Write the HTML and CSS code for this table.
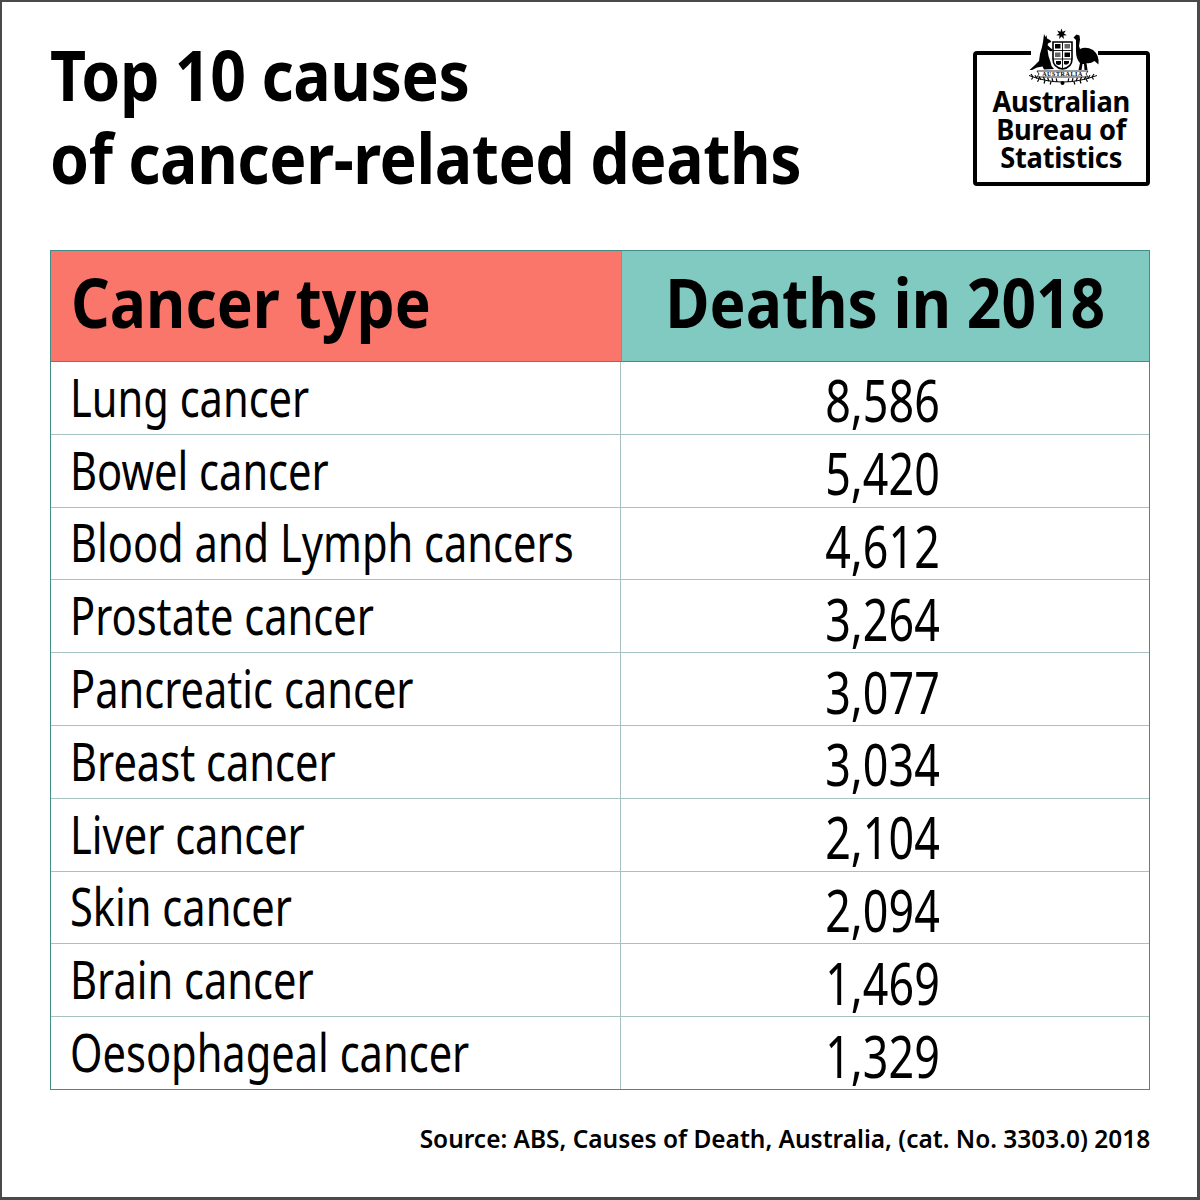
FILE: index.html
```html
<!DOCTYPE html>
<html lang="en">
<head>
<meta charset="utf-8">
<title>Top 10 causes of cancer-related deaths</title>
<link rel="stylesheet" href="styles.css">
</head>
<body>
<div class="frame">
  <header class="top">
    <h1 class="title"><span class="sx">Top 10 causes<br>of cancer-related deaths</span></h1>
    <div class="logo">
      <svg class="crest" width="90" height="62" viewBox="0 0 90 62" aria-hidden="true">
        <rect x="11" y="24" width="67" height="6" fill="#fff"/>
        <polygon fill="#000" points="41.5,2.5 42.58,5.75 45.8,4.57 43.94,7.44 46.86,9.22 43.45,9.56 43.89,12.96 41.5,10.5 39.11,12.96 39.55,9.56 36.14,9.22 39.06,7.44 37.2,4.57 40.42,5.75"/>
        <path fill="#000" d="M24,8 L25.5,11 L26.5,9 L27,12.5 L30,14 L31.5,16 L28.5,17 L27.5,19 L30.5,22 L33,24 L31,25.5 L27.5,23.5 L28.5,30 L30.5,36 L31.5,40 L34,43 L24,43.5 L22.5,40.5 L17,41.5 L12,44 L9.5,44 L15,39 L19,35 L20,28 L22,21 L23,16 L23.5,12 Z"/>
        <path d="M33,16 H52 V33 Q52,41.5 42.5,43 Q33,41.5 33,33 Z" fill="#fff" stroke="#000" stroke-width="1.6"/>
        <path d="M42.5,16 V43 M33,24.5 H52 M33,33 H52" stroke="#000" stroke-width="0.9"/>
        <rect x="35" y="18" width="5.5" height="4.5" fill="#000"/>
        <rect x="44.5" y="18" width="5.5" height="4.5" fill="#000" opacity="0.6"/>
        <rect x="35" y="26.5" width="5.5" height="4.5" fill="#000" opacity="0.6"/>
        <rect x="44.5" y="26.5" width="5.5" height="4.5" fill="#000"/>
        <path d="M36,35 h5 v3 q-2.5,2 -5,0 Z M44,35 h5 v2 q-2.5,3 -5,1 Z" fill="#000"/>
        <path fill="#000" d="M53.5,11.5 L56.5,8.5 L59.5,9.5 L60,13.5 L59,20 L60,23 Q66,20 73,24 Q79.5,29 78.5,38.5 L74.5,35 Q70,38 66.5,37 L67.5,44 L64.5,44 L64,38 L62.5,38 L61.5,44 L58.5,44 L60,37 Q56,33 56,25 L56,14 Z"/>
        <path d="M17,45 H68 L66,48 L68,51 H17 L19,48 Z" fill="#fff" stroke="#000" stroke-width="0.8"/>
        <text x="42.5" y="50.3" text-anchor="middle" class="crest-text">AUSTRALIA</text>
        <path d="M42,56 Q26,56 9,49.5 M43,56 Q59,56 77,49.5" fill="none" stroke="#000" stroke-width="1"/>
        <path d="M13,51 l-2,-3 M17,52.5 l-2,-3.2 M21,53.7 l-2,-3.2 M25,54.5 l-1.6,-3.4 M29,55.2 l-1.4,-3.4 M33,55.6 l-1,-3.5 M37,55.9 l-0.8,-3.5 M72,51 l2,-3 M68,52.5 l2,-3.2 M64,53.7 l2,-3.2 M60,54.5 l1.6,-3.4 M56,55.2 l1.4,-3.4 M52,55.6 l1,-3.5 M48,55.9 l0.8,-3.5 M13,51 l-1.5,2.5 M19,53 l-1.5,2.8 M25,54.5 l-1,3 M31,55.5 l-0.8,3 M72,51 l1.5,2.5 M66,53 l1.5,2.8 M60,54.5 l1,3 M54,55.5 l0.8,3" fill="none" stroke="#000" stroke-width="1.2"/>
        <circle cx="42.5" cy="57" r="2" fill="#000"/>
      </svg>
      <div class="logo-text"><span class="sx">Australian<br>Bureau of<br>Statistics</span></div>
    </div>
  </header>

  <div class="table">
    <div class="thead">
      <div class="th th-type"><span class="sx">Cancer type</span></div>
      <div class="th th-deaths"><span class="sx">Deaths in 2018</span></div>
    </div>
    <div class="tbody">
      <div class="row"><div class="cell name"><span class="sx">Lung cancer</span></div><div class="cell num"><span class="sx">8,586</span></div></div>
      <div class="row"><div class="cell name"><span class="sx">Bowel cancer</span></div><div class="cell num"><span class="sx">5,420</span></div></div>
      <div class="row"><div class="cell name"><span class="sx">Blood and Lymph cancers</span></div><div class="cell num"><span class="sx">4,612</span></div></div>
      <div class="row"><div class="cell name"><span class="sx">Prostate cancer</span></div><div class="cell num"><span class="sx">3,264</span></div></div>
      <div class="row"><div class="cell name"><span class="sx">Pancreatic cancer</span></div><div class="cell num"><span class="sx">3,077</span></div></div>
      <div class="row"><div class="cell name"><span class="sx">Breast cancer</span></div><div class="cell num"><span class="sx">3,034</span></div></div>
      <div class="row"><div class="cell name"><span class="sx">Liver cancer</span></div><div class="cell num"><span class="sx">2,104</span></div></div>
      <div class="row"><div class="cell name"><span class="sx">Skin cancer</span></div><div class="cell num"><span class="sx">2,094</span></div></div>
      <div class="row"><div class="cell name"><span class="sx">Brain cancer</span></div><div class="cell num"><span class="sx">1,469</span></div></div>
      <div class="row"><div class="cell name"><span class="sx">Oesophageal cancer</span></div><div class="cell num"><span class="sx">1,329</span></div></div>
    </div>
  </div>

  <p class="source"><span class="sx">Source: ABS, Causes of Death, Australia, (cat. No. 3303.0) 2018</span></p>
</div>
</body>
</html>
```

FILE: styles.css
```css
html, body {
  margin: 0;
  padding: 0;
  background: #fff;
}

.frame {
  width: 1200px;
  height: 1200px;
  box-sizing: border-box;
  border: 2px solid #4a4a4a;
  border-right-width: 3px;
  border-bottom-width: 3px;
  padding: 31px 47px 0 48px;
  font-family: "Noto Sans", "Open Sans", "Liberation Sans", sans-serif;
  color: #000;
  background: #fff;
}

.sx {
  display: inline-block;
  white-space: nowrap;
}

.top {
  display: flex;
  justify-content: space-between;
  align-items: flex-start;
  height: 217px;
}

.title {
  margin: 0;
  font-size: 70px;
  line-height: 83px;
  font-weight: 700;
  letter-spacing: -0.5px;
}

.title .sx {
  transform: scaleX(0.894);
  transform-origin: left top;
}

.logo {
  position: relative;
  margin-top: 18px;
  width: 177px;
  height: 135px;
  box-sizing: border-box;
  border: 4px solid #000;
  border-radius: 4px;
  text-align: center;
}

.crest {
  position: absolute;
  left: 43px;
  top: -29px;
  overflow: visible;
}

.crest-text {
  font-family: "Liberation Serif", "DejaVu Serif", serif;
  font-size: 6px;
  font-weight: 700;
  letter-spacing: 0.6px;
  fill: #000;
}

.logo-text {
  padding-top: 32px;
  font-size: 29px;
  line-height: 28px;
  font-weight: 700;
  letter-spacing: -0.3px;
}

.logo-text .sx {
  transform: scaleX(0.94);
  transform-origin: center top;
}

.table {
  width: 1100px;
  box-sizing: border-box;
  border: 1px solid #3f8d85;
}

.thead {
  display: grid;
  grid-template-columns: 570px 1fr;
  height: 110px;
  border-bottom: 1px solid #3f8d85;
}

.th {
  display: flex;
  align-items: center;
  padding-bottom: 9px;
  box-sizing: border-box;
  font-size: 68px;
  line-height: 1;
  font-weight: 700;
}

.th-type {
  background: #fa766b;
  padding-left: 20px;
}

.th-type .sx {
  transform: scaleX(0.89);
  transform-origin: left center;
}

.th-deaths {
  background: #80cac1;
  justify-content: center;
  border-left: 1px solid #5aa59c;
}

.th-deaths .sx {
  transform: scaleX(0.89);
  transform-origin: center center;
}

.row {
  display: grid;
  grid-template-columns: 570px 1fr;
  height: 71.8px;
  border-bottom: 1px solid #a6c3bf;
}

.row:last-child {
  border-bottom: none;
}

.cell {
  display: flex;
  align-items: center;
  box-sizing: border-box;
  line-height: 1;
  font-weight: 400;
  min-width: 0;
}

.name {
  padding-left: 19px;
  padding-bottom: 3px;
  font-size: 53px;
  border-right: 1px solid #a6c3bf;
}

.name .sx {
  transform: scaleX(0.785);
  transform-origin: left center;
}

.num {
  justify-content: flex-end;
  padding-right: 209px;
  padding-top: 4px;
  font-size: 59px;
}

.num .sx {
  transform: scaleX(0.76);
  transform-origin: right center;
}

.source {
  margin: 33px 0 0;
  text-align: right;
  font-size: 26px;
  line-height: 30px;
  font-weight: 600;
}

.source .sx {
  transform: scaleX(0.94);
  transform-origin: right center;
}
```
